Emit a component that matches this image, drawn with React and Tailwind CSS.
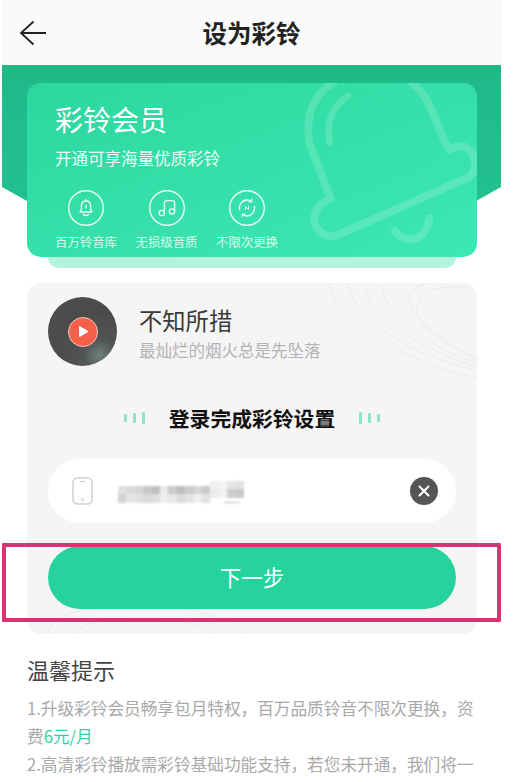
import React from "react";

const font = { fontFamily: '"Noto Sans CJK SC", "Noto Sans", sans-serif' };

const mosaic = [
  ["bg-[#e0e0e0]", "bg-[#d2d2d2]", 0],
  ["bg-[#dadada]", "bg-[#e4e4e4]", 0],
  ["bg-[#d6d6d6]", "bg-[#e0e0e0]", 0],
  ["bg-[#c6c6c6]", "bg-[#dadada]", 0],
  ["bg-[#c0c0c0]", "bg-[#e0e0e0]", 0],
  ["bg-[#ececec]", "bg-[#efefef]", 0],
  ["bg-[#cacaca]", "bg-[#e6e6e6]", 0],
  ["bg-[#bdbdbd]", "bg-[#dadada]", 0],
  ["bg-[#cccccc]", "bg-[#e4e4e4]", 0],
  ["bg-[#d8d8d8]", "bg-[#f0f0f0]", 0],
  ["bg-[#cbcbcb]", "bg-[#e2e2e2]", 0],
  ["bg-[#f0f0f0]", "bg-[#ececec]", 1],
  ["bg-[#f4f4f4]", "bg-[#f2f2f2]", 1],
  ["bg-[#e6e6e6]", "bg-[#cecece]", 1],
  ["bg-[#e2e2e2]", "bg-[#c8c8c8]", 1],
];

const perks = [
  {
    label: "百万铃音库",
    icon: (
      <>
        <path d="M18 11c-3 0-4.600 2.200-4.600 5v3c0 1.300-.8 2-1.400 3h12c-.6-1-1.400-1.700-1.400-3v-3c0-2.800-1.600-5-4.600-5Z" />
        <path d="M18 9.800V11M15.500 24.600c1.500 1 3.500 1 5 0M18 15.500v2.500" />
      </>
    ),
  },
  {
    label: "无损级音质",
    icon: (
      <>
        <circle cx="12.800" cy="23" r="2.600" />
        <circle cx="23" cy="21.500" r="2.600" />
        <path d="M15.400 23V13c0-1.500.9-2.400 2.400-2.400h5.500c1.500 0 2.300.9 2.300 2.400v8.500" />
      </>
    ),
  },
  {
    label: "不限次更换",
    icon: (
      <>
        <path d="M10.500 19.500c-.9-5 3-9.500 7.500-9.500 1.800 0 3.300.5 4.600 1.600M25.500 16.500c.9 5-3 9.500-7.500 9.500-1.800 0-3.300-.5-4.600-1.600" />
        <path d="M22.800 9v3h-3M13.200 27v-3h3M16.500 19.500v-3l3 3v-3" strokeWidth="1" />
      </>
    ),
  },
];

const BellMark = () => (
  <svg viewBox="0 0 570 555" fill="none" className="absolute left-[263px] top-[-5px] h-[185px] w-[190px]">
    <g stroke="#ffffff" strokeOpacity="0.16" strokeLinecap="round" strokeLinejoin="round">
      <path
        strokeWidth="24"
        d="M130 15C75 45 45 105 58 195L122 362C85 375 68 405 75 435C84 470 115 482 150 468L535 298C562 280 562 235 535 212C515 198 495 205 478 215C455 175 440 130 420 85C405 50 385 30 365 15"
      />
      <path strokeWidth="20" d="M174 53C125 85 108 135 119 195" />
      <path strokeWidth="24" d="M315 460C345 498 405 495 418 420" />
    </g>
  </svg>
);

const Hero = () => (
  <section className="relative pl-[25px] pr-[24px] pt-[18px]">
    <div className="absolute inset-x-0 top-0 h-[160px] bg-gradient-to-b from-[#1fb988] to-[#24c291] [clip-path:polygon(0_0,100%_0,100%_122px,90%_150px,90%_160px,10%_160px,10%_150px,0_122px)]" />
    <div className="relative h-[174px] overflow-hidden rounded-[14px] bg-gradient-to-br from-[#2dd79f] to-[#3ce8b3] pl-[28px] text-white">
      <BellMark />
      <h2 className="relative pt-[15px] text-[28px] leading-[42px]">彩铃会员</h2>
      <p className="relative mt-[6px] text-[16.5px] leading-[24px] text-white/90">开通可享海量优质彩铃</p>
      <div className="relative mt-[20px] flex gap-[18.5px]">
        {perks.map((perk) => (
          <div key={perk.label} className="flex w-[62px] flex-col items-center">
            <svg viewBox="0 0 36 36" fill="none" stroke="#ffffff" strokeWidth="1.4" strokeLinecap="round" strokeLinejoin="round" className="h-9 w-9 opacity-90">
              <circle cx="18" cy="18" r="17.3" />
              {perk.icon}
            </svg>
            <span className="mt-[6px] whitespace-nowrap text-[12.4px] leading-[20px] text-white/80">{perk.label}</span>
          </div>
        ))}
      </div>
    </div>
    <div className="relative mx-[21px] h-[11px] rounded-b-[12px] bg-[#b4f2dc]" />
  </section>
);

const Song = () => (
  <div className="relative flex items-start gap-[22px]">
    <div className="flex h-[69px] w-[69px] shrink-0 items-center justify-center rounded-full bg-[radial-gradient(circle_at_74%_84%,#6f807d_0%,#525555_20%,#4b4b4b_55%,#4e4e4e_100%)]">
      <div className="flex h-[30px] w-[30px] items-center justify-center rounded-full border border-[#f6c9b8] bg-[#f4604a]">
        <svg viewBox="0 0 12 12" className="ml-[2px] h-[13px] w-[13px]" fill="#ffffff" stroke="#ffffff" strokeLinejoin="round">
          <path d="M2.500 1.500 10 6l-7.500 4.500Z" />
        </svg>
      </div>
    </div>
    <div className="pt-[5px]">
      <h3 className="text-[23.3px] leading-[36px] text-[#3a3a3a]">不知所措</h3>
      <p className="text-[16.5px] leading-[24px] text-[#b3b3b3]">最灿烂的烟火总是先坠落</p>
    </div>
  </div>
);

const Bars = ({ heights }) => (
  <div className="flex items-center gap-[6px]">
    {heights.map((h, i) => (
      <span key={i} className={`w-[3px] rounded-[1px] bg-[#8fe3c6] ${h}`} />
    ))}
  </div>
);

const PhoneField = () => (
  <div className="mt-[25px] flex h-16 items-center rounded-full bg-white pl-[24px] pr-[18px]">
    <svg viewBox="0 0 21 28" fill="none" className="h-[28px] w-[21px] shrink-0">
      <rect x="1" y="1" width="19" height="26" rx="4.5" stroke="#cfcfcf" strokeWidth="1.5" />
      <path d="M8 4.500h5" stroke="#cfcfcf" strokeWidth="1.2" />
      <circle cx="10.500" cy="22.500" r="1.300" fill="#cfcfcf" />
    </svg>
    <div className="relative ml-[25px] flex h-[24px] items-end blur-[0.8px]">
      {mosaic.map(([top, bottom, lifted], i) => (
        <div key={i} className={`w-[8.4px] ${lifted ? "mb-[5px]" : ""}`}>
          <div className={`h-[8px] ${top}`} />
          <div className={`h-[9px] ${bottom}`} />
        </div>
      ))}
      <span className="absolute bottom-0 left-[106px] h-[1px] w-[16px] bg-[#b5b5b5]" />
    </div>
    <button className="ml-auto flex h-7 w-7 items-center justify-center rounded-full bg-[#555555]">
      <svg viewBox="0 0 14 14" className="h-[14px] w-[14px]" stroke="#ffffff" strokeWidth="2" strokeLinecap="round">
        <path d="M2.500 2.500l9 9M11.500 2.500l-9 9" />
      </svg>
    </button>
  </div>
);

const LoginCard = () => (
  <section className="relative ml-[25px] mr-[24px] mt-[15px] h-[351px] rounded-[14px] bg-[#f5f5f5] px-[21px] pt-[14px]">
    {/* line pattern behind the content */}
    <div className="absolute inset-0 overflow-hidden rounded-[14px]">
      <svg viewBox="0 0 160 100" fill="none" stroke="#ebebeb" className="absolute left-[293px] top-[-3px] h-[100px] w-[160px]">
        <path d="M9 3C13 33 67 77 157 98" />
        <path d="M28 3C30 30 77 73 157 90" />
        <path d="M45 5C45 33 100 70 157 87" />
        <path d="M63 5C60 33 113 70 157 83" />
        <path d="M107 3C77 10 80 37 157 80" />
        <path d="M150 7C110 5 97 13 97 30C97 47 123 63 157 78" />
      </svg>
      <svg viewBox="0 0 240 32" fill="none" stroke="#ebebeb" className="absolute bottom-0 left-[18px] h-[32px] w-[240px]">
        <path d="M3 32C4 12 40 3 100 3C150 4 180 16 200 32" />
        <path d="M30 32C36 20 70 15 110 16C140 18 155 24 170 32" />
      </svg>
    </div>

    <Song />

    <div className="relative mt-[36px] flex h-[32px] items-center justify-center">
      <Bars heights={["h-[8px]", "h-[10px]", "h-[12px]"]} />
      <h3 className="mx-[24px] text-[20.8px] font-bold leading-[32px] text-[#111111]">登录完成彩铃设置</h3>
      <Bars heights={["h-[12px]", "h-[10px]", "h-[8px]"]} />
    </div>

    <div className="relative">
      <PhoneField />
      <button className="mt-[23px] flex h-[63px] w-full items-center justify-center rounded-full bg-[#26d39c] text-[21.5px] text-white">
        下一步
      </button>
    </div>

    {/* pink highlight drawn over the screenshot */}
    <div className="absolute left-[-25px] top-[260px] h-[79px] w-[499px] rounded-[1px] border-[4px] border-[#dc3173]" />
  </section>
);

const Tips = () => (
  <section className="pl-[25px] pt-[18px] text-[16.65px] leading-[28px] text-[#a9a9a9]">
    <h3 className="mb-[8px] text-[22px] leading-[34px] text-[#444444]">温馨提示</h3>
    <p className="whitespace-nowrap">1.升级彩铃会员畅享包月特权，百万品质铃音不限次更换，资</p>
    <p className="whitespace-nowrap">
      费<span className="text-[#2fd3a0]">6元/月</span>
    </p>
    <p className="whitespace-nowrap">2.高清彩铃播放需彩铃基础功能支持，若您未开通，我们将一</p>
    <p className="-mt-[2px] whitespace-nowrap text-[#e8e8e8]">并为您开通彩铃基础功能，基础功能费<span className="text-[#cdf3e6]">5元/月</span></p>
  </section>
);

export default function App() {
  return (
    <div className="h-[782px] w-[528px] overflow-hidden bg-white" style={font}>
      <div className="ml-[2px] w-[499px]">
        <header className="relative flex h-[65px] items-center justify-center bg-[#fafafa]">
          <svg viewBox="0 0 28 26" fill="none" stroke="#222222" strokeWidth="1.8" className="absolute left-[17px] top-[20px] h-[26px] w-[28px]">
            <path d="M27 13H2M14.500 1.500 2 13l12.500 11.500" />
          </svg>
          <h1 className="pt-[2px] text-[24.5px] font-bold text-[#222222]">设为彩铃</h1>
        </header>
        <Hero />
        <LoginCard />
        <Tips />
      </div>
    </div>
  );
}
